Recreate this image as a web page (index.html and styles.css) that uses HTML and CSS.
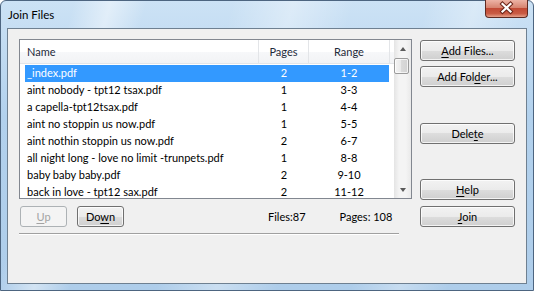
FILE: index.html
```html
<!DOCTYPE html>
<html lang="en">
<head>
<meta charset="UTF-8">
<title>Join Files</title>
<link rel="stylesheet" href="styles.css">
</head>
<body>
<div class="window">
  <div class="titlebar">
    <span class="title">Join Files</span>
    <div class="close">
      <svg width="43" height="18" viewBox="0 0 43 18">
        <path d="M17.5 5 L25.5 12.5 M25.5 5 L17.5 12.5" stroke="#6b2418" stroke-width="4.2" stroke-linecap="square" fill="none"/>
        <path d="M17.5 5 L25.5 12.5 M25.5 5 L17.5 12.5" stroke="#fff" stroke-width="2.2" stroke-linecap="square" fill="none"/>
      </svg>
    </div>
  </div>

  <div class="client">
    <div class="left">
      <div class="listbox">
        <div class="list">
          <div class="header">
            <div class="hcell h-name">Name</div>
            <div class="hcell h-pages">Pages</div>
            <div class="hcell h-range">Range</div>
            <div class="hcell h-fill"></div>
          </div>
          <div class="row selected"><span class="c-name">_index.pdf</span><span class="c-pages">2</span><span class="c-range">1-2</span></div>
          <div class="row"><span class="c-name">aint nobody - tpt12 tsax.pdf</span><span class="c-pages">1</span><span class="c-range">3-3</span></div>
          <div class="row"><span class="c-name">a capella-tpt12tsax.pdf</span><span class="c-pages">1</span><span class="c-range">4-4</span></div>
          <div class="row"><span class="c-name">aint no stoppin us now.pdf</span><span class="c-pages">1</span><span class="c-range">5-5</span></div>
          <div class="row"><span class="c-name">aint nothin stoppin us now.pdf</span><span class="c-pages">2</span><span class="c-range">6-7</span></div>
          <div class="row"><span class="c-name">all night long - love no limit -trunpets.pdf</span><span class="c-pages">1</span><span class="c-range">8-8</span></div>
          <div class="row"><span class="c-name">baby baby baby.pdf</span><span class="c-pages">2</span><span class="c-range">9-10</span></div>
          <div class="row"><span class="c-name">back in love - tpt12 sax.pdf</span><span class="c-pages">2</span><span class="c-range">11-12</span></div>
        </div>
        <div class="scrollbar">
          <div class="sb-arrow"><span class="tri-up"></span></div>
          <div class="sb-thumb"></div>
          <div class="sb-track"></div>
          <div class="sb-arrow"><span class="tri-down"></span></div>
        </div>
      </div>

      <div class="bottom">
        <button class="btn small" disabled><u>U</u>p</button>
        <button class="btn small down">Do<u>w</u>n</button>
        <span class="files">Files:87</span>
        <span class="pages">Pages: 108</span>
      </div>

      <div class="separator"></div>
    </div>

    <div class="right">
      <button class="btn"><u>A</u>dd Files...</button>
      <button class="btn gap-s">Add Fol<u>d</u>er...</button>
      <button class="btn gap-delete">Dele<u>t</u>e</button>
      <button class="btn gap-help"><u>H</u>elp</button>
      <button class="btn gap-join"><u>J</u>oin</button>
    </div>
  </div>
</div>
</body>
</html>
```

FILE: styles.css
```css
body {margin: 0; font: 11px Lato, "Noto Sans", sans-serif; color: #000; background: #fff;}
u {text-decoration: underline; text-underline-offset: 2px;}

/* window frame */
.window {width: 534px; height: 291px; box-sizing: border-box; display: flex; flex-direction: column; border: 1px solid #4d6580; border-radius: 6px 6px 0 0;
  background:
    linear-gradient(105deg, rgba(255,255,255,0) 12%, rgba(255,255,255,.45) 18%, rgba(255,255,255,0) 24%, rgba(255,255,255,0) 38%, rgba(255,255,255,.35) 48%, rgba(255,255,255,0) 58%, rgba(255,255,255,0) 70%, rgba(255,255,255,.3) 78%, rgba(255,255,255,0) 86%),
    linear-gradient(#cce2f5, #b2d1ed 40%, #aecdea);}
.titlebar {height: 27px; flex: none; display: flex; justify-content: space-between; align-items: flex-start; padding: 0 5px 0 7px;}
.title {padding-top: 6px; line-height: 15px; font-size: 11.5px; color: #000;}
.close {width: 43px; height: 18px; margin-top: -1px; border: 1px solid #5e2a22; border-top: 0; border-radius: 0 0 4px 4px; box-sizing: border-box;
  background: linear-gradient(#edb3a5, #d78470 45%, #c24a35 50%, #c95c45 80%, #e6a08a);}
.close svg {display: block; margin: -1px 0 0 -1px;}

/* client area */
.client {flex: 1; margin: 0 6px 6px; border: 1px solid #6e8091; background: #f0f0f0; display: flex; padding: 10px 0 0 11px;}
.left {width: 393px;}
.right {width: 95px; margin-left: 8px; padding-top: 1px; display: flex; flex-direction: column;}

/* list view */
.listbox {height: 160px; box-sizing: border-box; border: 1px solid #828790; background: #fff; display: flex;}
.list {flex: 1; overflow: hidden;}
.header {height: 24px; box-sizing: border-box; display: flex; border-bottom: 1px solid #e3e5e8; background: linear-gradient(#fff, #fff 50%, #f7f8fa 50%, #f2f3f5); color: #1e2a3a;}
.hcell {line-height: 23px; box-sizing: border-box; border-right: 1px solid #e3e5e8;}
.h-name {width: 239px; padding-left: 7px;}
.h-pages {width: 50px; text-align: center;}
.h-range {width: 81px; text-align: center;}
.h-fill {flex: 1; border-right: 0;}
.row {height: 17px; line-height: 16px; margin: 0 5px; display: flex; white-space: nowrap;}
.header + .row {margin-top: 1px;}
.row.selected {background: #3399ff; color: #fff;}
.c-name {width: 234px; padding-left: 2px; box-sizing: border-box;}
.c-pages {width: 50px; text-align: center;}
.c-range {flex: 1; text-align: center;}

/* scrollbar */
.scrollbar {width: 17px; display: flex; flex-direction: column; background: linear-gradient(to right, #e4e4e4, #f4f4f4 30%, #f4f4f4 70%, #e9e9e9);}
.sb-arrow {height: 17px; display: flex; align-items: center; justify-content: center;}
.tri-up, .tri-down {width: 0; height: 0; border-left: 3.5px solid transparent; border-right: 3.5px solid transparent;}
.tri-up {border-bottom: 4px solid #5a5a5a;}
.tri-down {border-top: 4px solid #5a5a5a;}
.sb-thumb {height: 16px; width: 15px; margin: 1px 0 0 0; box-sizing: border-box; border: 1px solid #9b9b9b; border-radius: 2px;
  background: linear-gradient(to right, #f4f4f4, #e8e8e8 50%, #dadada 50%, #d2d2d2); box-shadow: inset 0 0 0 1px rgba(255,255,255,.7);}
.sb-track {flex: 1;}

/* buttons */
.btn {height: 21px; width: 95px; padding: 0; font: inherit; color: #000; border: 1px solid #707070; border-radius: 3px;
  background: linear-gradient(#f2f2f2, #ebebeb 50%, #dddddd 50%, #cfcfcf); box-shadow: inset 0 0 0 1px rgba(255,255,255,.75);}
.btn:disabled {color: #a3a3a3; border-color: #adb2b5; background: #f4f4f4; box-shadow: none;}
.btn.small {width: 47px;}
.gap-s {margin-top: 5px;}
.gap-delete {margin-top: 36px;}
.gap-help {margin-top: 35px;}
.gap-join {margin-top: 6px;}

.bottom {margin-top: 7px; height: 21px; display: flex; align-items: center; padding-left: 1px;}
.bottom .down {margin-left: 10px;}
.files {margin-left: 144px;}
.pages {margin-left: 34px;}

.separator {width: 380px; margin-top: 6px; border-top: 1px solid #a0a0a0; border-bottom: 1px solid #fff;}
```
